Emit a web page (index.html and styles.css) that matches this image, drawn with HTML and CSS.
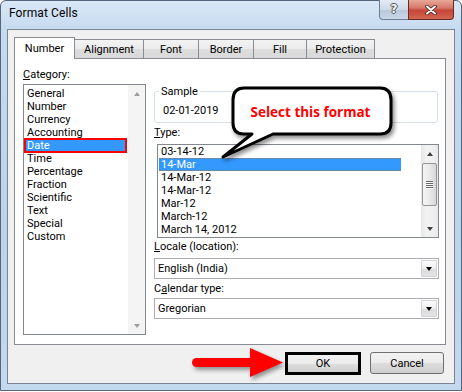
FILE: index.html
```html
<!DOCTYPE html>
<html>
<head>
<meta charset="utf-8">
<link rel="stylesheet" href="styles.css">
</head>
<body>
<div class="window">
  <div class="titlebar">
    <span class="title">Format Cells</span>
    <div class="caption-btns">
      <div class="cap-help">?</div>
      <div class="cap-close">
        <svg width="12" height="10" viewBox="0 0 12 10"><path d="M2 1.5 L10 8.5 M10 1.5 L2 8.5" stroke="#4a1c18" stroke-width="3.6" stroke-linecap="round"/><path d="M2 1.5 L10 8.5 M10 1.5 L2 8.5" stroke="#fff" stroke-width="2" stroke-linecap="round"/></svg>
      </div>
    </div>
  </div>
  <div class="client">
    <div class="tabs">
      <div class="tab selected">Number</div>
      <div class="tab w-align">Alignment</div>
      <div class="tab w-font">Font</div>
      <div class="tab w-border">Border</div>
      <div class="tab w-fill">Fill</div>
      <div class="tab w-prot">Protection</div>
    </div>
    <div class="panel">
      <div class="col-left">
        <div class="label"><u>C</u>ategory:</div>
        <div class="listbox cat">
          <div class="items">
            <div class="item">General</div>
            <div class="item">Number</div>
            <div class="item">Currency</div>
            <div class="item">Accounting</div>
            <div class="item sel marked">Date</div>
            <div class="item">Time</div>
            <div class="item">Percentage</div>
            <div class="item">Fraction</div>
            <div class="item">Scientific</div>
            <div class="item">Text</div>
            <div class="item">Special</div>
            <div class="item">Custom</div>
          </div>
          <div class="vscroll disabled">
            <span class="sb-arrow up"></span>
            <span class="sb-track"></span>
            <span class="sb-arrow down"></span>
          </div>
        </div>
      </div>
      <div class="col-right">
        <fieldset class="sample">
          <legend>Sample</legend>
          <div class="sample-val">02-01-2019</div>
        </fieldset>
        <div class="label type-label"><u>T</u>ype:</div>
        <div class="listbox type">
          <div class="items">
            <div class="item">03-14-12</div>
            <div class="item sel focus">14-Mar</div>
            <div class="item">14-Mar-12</div>
            <div class="item">14-Mar-12</div>
            <div class="item">Mar-12</div>
            <div class="item">March-12</div>
            <div class="item">March 14, 2012</div>
          </div>
          <div class="vscroll">
            <span class="sb-arrow up"></span>
            <span class="sb-track"><span class="thumb"><span class="grip"></span></span></span>
            <span class="sb-arrow down"></span>
          </div>
        </div>
        <div class="label locale-label"><u>L</u>ocale (location):</div>
        <div class="combo locale">
          <span class="combo-text">English (India)</span>
          <span class="drop"></span>
        </div>
        <div class="label cal-label">C<u>a</u>lendar type:</div>
        <div class="combo cal">
          <span class="combo-text">Gregorian</span>
          <span class="drop"></span>
        </div>
      </div>
    </div>
    <div class="buttons">
      <button class="btn ok">OK</button>
      <button class="btn">Cancel</button>
    </div>
  </div>

  <div class="callout">
    <svg class="callout-shape" width="180" height="85" viewBox="220 80 180 85">
      <path d="M244 88 H380 Q391 88 391 100 V123 Q391 134 380 134 H273 L223 157 L252 134 H244 Q233 134 233 123 V100 Q233 88 244 88 Z" fill="#fff" stroke="#000" stroke-width="3" stroke-linejoin="round"/>
    </svg>
    <span class="callout-text">Select this format</span>
  </div>

  <svg class="arrow" width="110" height="45" viewBox="185 340 110 45">
    <rect x="192" y="358" width="62" height="9" rx="4.5" fill="#f00"/>
    <polygon points="250,348 283,362.5 250,377" fill="#f00"/>
  </svg>
</div>
</body>
</html>
```

FILE: styles.css
```css
* { box-sizing: border-box; }
html, body { margin: 0; padding: 0; }
body {
  width: 462px;
  height: 392px;
  overflow: hidden;
  background: #fff;
  font-family: Roboto, "Open Sans", sans-serif;
  font-size: 11px;
  color: #000;
}
u { text-decoration: underline; text-underline-offset: 1px; }

.window {
  position: relative;
  width: 462px;
  height: 391px;
  border: 1px solid #56657a;
  border-radius: 6px 6px 0 0;
  background: linear-gradient(to bottom, #dae8f6 0, #c6daf0 28px, #bcd3ec 60%, #c4d8ee 100%);
  display: flex;
  flex-direction: column;
}

.titlebar {
  height: 28px;
  display: flex;
  align-items: flex-start;
  padding: 4px 0 0 8px;
}
.title {
  font-size: 12px;
  line-height: 16px;
  letter-spacing: 0.1px;
}
.caption-btns {
  margin-left: auto;
  margin-top: -5px;
  margin-right: 7px;
  display: flex;
}
.cap-help {
  width: 29px;
  height: 20px;
  border: 1px solid #6d7f96;
  border-top: none;
  border-right: none;
  border-radius: 0 0 0 4px;
  background: linear-gradient(to bottom, #e3ebf5 0, #cdd9e8 50%, #b8c8dc 51%, #c9d6e6 100%);
  color: #f4f4f4;
  font-family: "DejaVu Sans", sans-serif;
  font-weight: bold;
  font-size: 12px;
  line-height: 18px;
  text-align: center;
  text-shadow: 1px 0 0 #555, -1px 0 0 #555, 0 1px 0 #555, 0 -1px 0 #555;
}
.cap-close {
  width: 46px;
  height: 20px;
  border: 1px solid #6b2a24;
  border-top: none;
  border-radius: 0 0 4px 0;
  background: linear-gradient(to bottom, #e8a899 0, #d87a6c 40%, #c6463a 55%, #d2654f 100%);
  display: flex;
  align-items: center;
  justify-content: center;
}

.client {
  margin: 0 6px;
  height: 355px;
  border: 1px solid #7b8591;
  background: #f0f0f0;
  padding: 7px 10px 0 6px;
  display: flex;
  flex-direction: column;
}

.tabs {
  display: flex;
  align-items: flex-end;
  height: 22px;
  margin-bottom: -1px;
  position: relative;
  z-index: 2;
}
.tab {
  height: 19px;
  margin-bottom: 1px;
  margin-left: -1px;
  border: 1px solid #898c95;
  border-bottom: none;
  background: linear-gradient(to bottom, #f3f3f3 0, #ebebeb 50%, #dddddd 51%, #d9d9d9 100%);
  padding-top: 3px;
  line-height: 13px;
  text-align: center;
}
.tab.selected {
  width: 61px;
  height: 22px;
  margin-left: 0;
  margin-bottom: 0;
  padding-top: 4px;
  background: #fff;
  position: relative;
  z-index: 3;
}
.w-align { width: 70px; }
.w-font { width: 56px; }
.w-border { width: 56px; }
.w-fill { width: 54px; }
.w-prot { width: 69px; }

.panel {
  width: 432px;
  height: 287px;
  border: 1px solid #898c95;
  background: #fff;
  display: flex;
  gap: 8px;
  padding: 9px 0 0 8px;
}
.label { line-height: 13px; }
.col-left { width: 123px; display: flex; flex-direction: column; }
.col-left .label { margin-bottom: 3px; }
.col-right { width: 285px; display: flex; flex-direction: column; }

.listbox {
  border: 1px solid #828790;
  background: #fff;
  display: flex;
}
.listbox .items { flex: 1; }
.item { line-height: 13px; height: 13px; white-space: nowrap; }
.cat { width: 123px; height: 251px; }
.cat .items { padding-top: 2px; }
.cat .item { padding-left: 3px; }
.cat .item.sel { margin-left: 1px; width: 101px; padding-left: 2px; }
.item.sel { background: #3399ff; color: #fff; }
.item.marked { outline: 2px solid #f00; outline-offset: -1px; }

.type { width: 282px; height: 94px; margin-left: 3px; margin-top: 5px; }
.type .items { padding-left: 1px; }
.type .item { padding-left: 2px; }
.type .item.sel { width: 242px; border-top: 1px dotted #9a7a4a; border-bottom: 1px dotted #9a7a4a; line-height: 11px; }

.vscroll {
  width: 17px;
  display: flex;
  flex-direction: column;
  background: linear-gradient(to right, #e6e6e6 0, #f2f2f2 30%, #f0f0f0 70%, #e8e8e8 100%);
}
.vscroll.disabled { background: #f4f4f4; }
.sb-track { flex: 1; display: flex; flex-direction: column; }
.sb-arrow {
  height: 17px;
  display: flex;
  align-items: center;
  justify-content: center;
}
.sb-arrow::before {
  content: "";
  border-left: 3.5px solid transparent;
  border-right: 3.5px solid transparent;
}
.sb-arrow.up::before { border-bottom: 4px solid #404040; }
.sb-arrow.down::before { border-top: 4px solid #404040; }
.disabled .sb-arrow.up::before { border-bottom-color: #9e9e9e; }
.disabled .sb-arrow.down::before { border-top-color: #9e9e9e; }
.thumb {
  margin: 1px 1px 0;
  height: 43px;
  border: 1px solid #959595;
  border-radius: 2px;
  background: linear-gradient(to right, #f5f5f5 0, #e9e9e9 50%, #d6d6d6 100%);
  display: flex;
  align-items: center;
  justify-content: center;
}
.grip {
  width: 7px;
  height: 8px;
  background: repeating-linear-gradient(to bottom, #6a6a6a 0, #6a6a6a 1px, #fafafa 1px, #fafafa 2px);
}

.sample {
  margin: 17px 0 0;
  width: 284px;
  padding: 0 4px 5px;
  border: 1px solid #d5dfe5;
  border-radius: 3px;
}
.sample legend { padding: 0 2px; line-height: 13px; }
.sample-val { padding: 6px 0 0 4px; line-height: 13px; }

.type-label { margin-top: 3px; }
.locale-label { margin-top: 2px; }
.cal-label { margin-top: 3px; }

.combo {
  width: 285px;
  height: 21px;
  border: 1px solid #abadb3;
  background: #fff;
  display: flex;
  align-items: center;
  padding-left: 3px;
}
.locale { margin-top: 5px; }
.cal { margin-top: 3px; }
.combo-text { flex: 1; line-height: 13px; }
.drop {
  width: 16px;
  height: 17px;
  margin-right: 1px;
  border: 1px solid #d2d2d2;
  border-radius: 1px;
  background: linear-gradient(to bottom, #fbfbfb 0, #ededed 50%, #dcdcdc 51%, #e4e4e4 100%);
  display: flex;
  align-items: center;
  justify-content: center;
}
.drop::before {
  content: "";
  border-left: 3.5px solid transparent;
  border-right: 3.5px solid transparent;
  border-top: 4px solid #000;
}

.buttons {
  display: flex;
  justify-content: flex-end;
  gap: 9px;
  margin-top: 7px;
}
.btn {
  width: 74px;
  height: 22px;
  border: 1px solid #707070;
  border-radius: 3px;
  background: linear-gradient(to bottom, #f2f2f2 0, #ebebeb 50%, #dddddd 51%, #cfcfcf 100%);
  font-family: inherit;
  font-size: 11px;
  color: #000;
  padding: 0;
  line-height: 13px;
}
.btn.ok {
  width: 76px;
  height: 23px;
  border: 3px solid #000;
  border-radius: 0;
}

.callout {
  position: absolute;
  left: 219px;
  top: 79px;
  width: 180px;
  height: 85px;
}
.callout-shape {
  display: block;
  filter: drop-shadow(2px 3px 2px rgba(0, 0, 0, 0.45));
}
.callout-text {
  position: absolute;
  left: 14px;
  top: 9px;
  width: 158px;
  height: 46px;
  display: flex;
  align-items: center;
  justify-content: center;
  padding-right: 5px;
  color: #f00;
  font-family: "Open Sans", sans-serif;
  font-weight: bold;
  font-size: 13.5px;
  line-height: 16px;
}
.arrow {
  position: absolute;
  left: 184px;
  top: 339px;
  filter: drop-shadow(2px 3px 2px rgba(0, 0, 0, 0.4));
}
```
